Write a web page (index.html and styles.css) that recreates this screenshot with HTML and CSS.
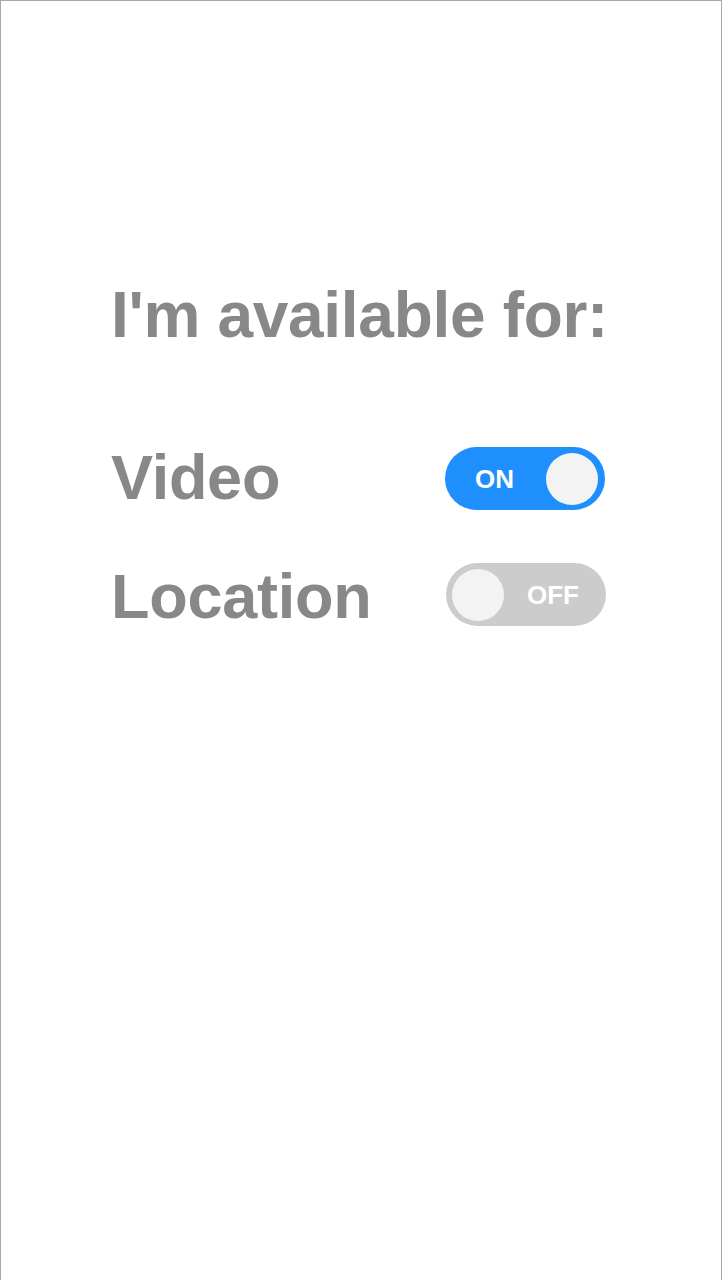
FILE: index.html
```html
<!DOCTYPE html>
<html lang="en">
<head>
<meta charset="utf-8">
<title>Availability</title>
<link rel="stylesheet" href="styles.css">
</head>
<body>
<div class="frame">
  <div class="content">
    <h1 class="title">I'm available for:</h1>
    <div class="row row-video">
      <span class="label">Video</span>
      <div class="switch switch-on">
        <span class="switch-text">ON</span>
        <span class="knob"></span>
      </div>
    </div>
    <div class="row row-location">
      <span class="label label-location">Location</span>
      <div class="switch switch-off">
        <span class="knob"></span>
        <span class="switch-text">OFF</span>
      </div>
    </div>
  </div>
</div>
</body>
</html>
```
FILE: styles.css
```css
html, body {
  margin: 0;
  padding: 0;
  background: #ffffff;
}

.frame {
  box-sizing: border-box;
  width: 722px;
  height: 1280px;
  border: 1px solid #a8a8a8;
  border-bottom: none;
  background: #ffffff;
  font-family: "Liberation Sans", Arial, sans-serif;
  color: #888888;
}

.content {
  padding: 282px 0 0 110px;
  width: 494px;
}

.title {
  margin: 0;
  font-size: 64px;
  line-height: 64px;
  font-weight: bold;
  letter-spacing: -0.3px;
  white-space: nowrap;
}

.row {
  display: flex;
  align-items: center;
  justify-content: space-between;
  height: 63px;
}

.row-video {
  margin-top: 100px;
}

.row-location {
  margin-top: 53px;
}

.label {
  font-size: 63px;
  line-height: 64px;
  font-weight: bold;
  letter-spacing: -0.25px;
  position: relative;
  top: -2px;
  white-space: nowrap;
}

.label-location {
  top: 1px;
}

.switch {
  box-sizing: border-box;
  width: 160px;
  height: 63px;
  border-radius: 32px;
  display: flex;
  align-items: center;
  justify-content: space-between;
  padding: 0 7px 0 6px;
}

.switch-on {
  background: #1e8ffd;
  padding-left: 30px;
}

.switch-off {
  background: #cccccc;
  padding-right: 27px;
  margin-right: -1px;
}

.knob {
  width: 52px;
  height: 52px;
  border-radius: 50%;
  background: #f3f3f3;
}

.switch-text {
  color: #ffffff;
  font-size: 26px;
  font-weight: bold;
  line-height: 26px;
}
```
